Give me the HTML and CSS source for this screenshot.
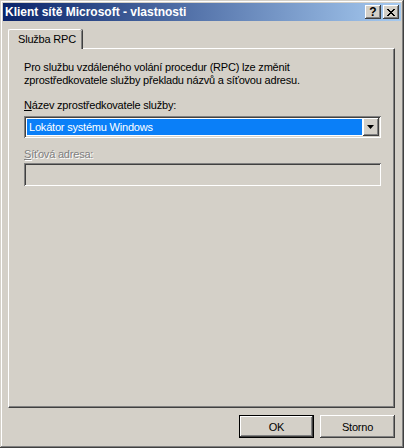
FILE: index.html
```html
<!DOCTYPE html>
<html lang="cs">
<head>
<meta charset="utf-8">
<title>Klient sítě Microsoft - vlastnosti</title>
<link rel="stylesheet" href="styles.css">
</head>
<body>
<div class="window">
  <div class="titlebar">
    <span class="title">Klient sítě Microsoft - vlastnosti</span>
    <div class="caption-buttons">
      <span class="cbtn help">?</span>
      <span class="cbtn close"><svg width="8" height="7" viewBox="0 0 8 7"><path d="M0 0h2v1h1v1h2v-1h1v-1h2v1h-1v1h-1v1h-1v1h1v1h1v1h1v1h-2v-1h-1v-1h-2v1h-1v1h-2v-1h1v-1h1v-1h1v-1h-1v-1h-1v-1h-1z" fill="#000"/></svg></span>
    </div>
  </div>
  <div class="content">
    <div class="tabs">
      <div class="tab active">Služba RPC</div>
    </div>
    <div class="panel">
      <p class="desc">Pro službu vzdáleného volání procedur (RPC) lze změnit<br>zprostředkovatele služby překladu názvů a síťovou adresu.</p>
      <div class="label"><u>N</u>ázev zprostředkovatele služby:</div>
      <div class="combo">
        <div class="combo-value">Lokátor systému Windows</div>
        <div class="combo-btn"><svg width="7" height="4" viewBox="0 0 7 4"><path d="M0 0h7l-3.5 4z" fill="#000"/></svg></div>
      </div>
      <div class="label disabled"><u>S</u>íťová adresa:</div>
      <div class="field disabled-field"></div>
    </div>
    <div class="buttons">
      <div class="btn default"><span>OK</span></div>
      <div class="btn"><span>Storno</span></div>
    </div>
  </div>
</div>
</body>
</html>
```
FILE: styles.css
```css
* { box-sizing: border-box; }
html, body { margin: 0; padding: 0; }
body {
  width: 404px;
  height: 448px;
  background: #d4d0c8;
  font-family: Tahoma, "Liberation Sans", "DejaVu Sans", sans-serif;
  font-size: 11px;
  letter-spacing: -0.2px;
  color: #000;
}
.window {
  width: 404px;
  height: 448px;
  padding: 3px;
  background: #d4d0c8;
  box-shadow: inset -1px -1px #404040, inset 1px 1px #d4d0c8, inset -2px -2px #808080, inset 2px 2px #fff;
  display: flex;
  flex-direction: column;
}
.titlebar {
  height: 18px;
  background: linear-gradient(to right, #0a246a, #a6caf0);
  display: flex;
  align-items: center;
  justify-content: space-between;
  padding: 0 2px 0 2px;
}
.title {
  color: #fff;
  font-weight: bold;
  font-size: 12px;
  letter-spacing: 0;
  white-space: nowrap;
}
.caption-buttons { display: flex; gap: 2px; }
.cbtn {
  width: 16px;
  height: 14px;
  background: #d4d0c8;
  box-shadow: inset -1px -1px #404040, inset 1px 1px #fff, inset -2px -2px #808080;
  display: flex;
  align-items: center;
  justify-content: center;
  font-weight: bold;
  font-size: 12px;
  line-height: 14px;
  letter-spacing: 0;
  color: #000;
}
.cbtn.help { font-family: "Liberation Sans", sans-serif; padding-bottom: 1px; }
.cbtn.close svg { display: block; }
.content {
  flex: 1;
  padding: 8px 6px 0 5px;
  display: flex;
  flex-direction: column;
}
.tabs {
  display: flex;
  height: 19px;
  position: relative;
  z-index: 1;
}
.tab {
  width: 74px;
  height: 20px;
  padding: 3px 0 0 9px;
  background: #d4d0c8;
  border-left: 1px solid #fff;
  border-top: 1px solid #fff;
  border-top-left-radius: 2px;
  border-top-right-radius: 2px;
  box-shadow: inset -1px 0 #808080, 1px 0 #404040;
  white-space: nowrap;
}
.panel {
  height: 360px;
  background: #d4d0c8;
  border-left: 1px solid #fff;
  border-top: 1px solid #fff;
  border-right: 1px solid #404040;
  border-bottom: 1px solid #404040;
  box-shadow: inset -1px -1px #808080;
  padding: 12px 13px 0 15px;
}
.desc {
  margin: 0;
  line-height: 13px;
}
.label {
  margin-top: 12px;
  line-height: 13px;
}
.label u { text-decoration: underline; text-underline-offset: 1px; }
.label.disabled {
  margin-top: 10px;
  color: #808080;
  text-shadow: 1px 1px #fff;
}
.combo {
  margin-top: 4px;
  width: 357px;
  height: 22px;
  background: #fff;
  padding: 2px;
  box-shadow: inset 1px 1px #808080, inset -1px -1px #fff, inset 2px 2px #404040, inset -2px -2px #d4d0c8;
  display: flex;
}
.combo-value {
  flex: 1;
  margin: 1px;
  background: #0a7ff8;
  color: #fff;
  padding-left: 2px;
  line-height: 16px;
  white-space: nowrap;
}
.combo-btn {
  width: 16px;
  height: 18px;
  background: #d4d0c8;
  box-shadow: inset -1px -1px #404040, inset 1px 1px #fff, inset -2px -2px #808080;
  display: flex;
  align-items: center;
  justify-content: center;
}
.combo-btn svg { display: block; margin-left: -1px; }
.field {
  margin-top: 2px;
  width: 357px;
  height: 23px;
  box-shadow: inset 1px 1px #808080, inset -1px -1px #fff, inset 2px 2px #404040, inset -2px -2px #d4d0c8;
}
.disabled-field { background: #d4d0c8; }
.buttons {
  margin-top: 7px;
  display: flex;
  justify-content: flex-end;
  gap: 6px;
}
.btn {
  width: 75px;
  height: 23px;
  background: #d4d0c8;
  box-shadow: inset -1px -1px #404040, inset 1px 1px #fff, inset -2px -2px #808080;
  display: flex;
  align-items: center;
  justify-content: center;
}
.btn.default {
  box-shadow: inset 0 0 0 1px #000, inset -2px -2px #404040, inset 2px 2px #fff, inset -3px -3px #808080;
}
```
